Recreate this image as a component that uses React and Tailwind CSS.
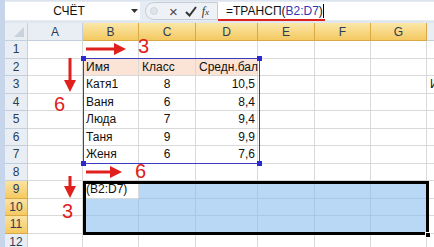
import React from "react";

const cols = [
  { key: "A", w: "w-[55px]", sel: false },
  { key: "B", w: "w-[56px]", sel: true },
  { key: "C", w: "w-[57px]", sel: true },
  { key: "D", w: "w-[62px]", sel: true },
  { key: "E", w: "w-[57px]", sel: true },
  { key: "F", w: "w-[56px]", sel: true },
  { key: "G", w: "w-[56px]", sel: true },
  { key: "H", w: "flex-1", sel: false, label: "" },
];

const data = {
  2: { B: "Имя", C: "Класс", D: "Средн.бал" },
  3: { B: "Катя1", C: "8", D: "10,5", H: "И" },
  4: { B: "Ваня", C: "6", D: "8,4" },
  5: { B: "Люда", C: "7", D: "9,4" },
  6: { B: "Таня", C: "9", D: "9,9" },
  7: { B: "Женя", C: "6", D: "7,6" },
  9: { B: "(B2:D7)" },
};

const rows = [1, 2, 3, 4, 5, 6, 7, 8, 9, 10, 11, 12];

const inSel = (r, c) => r >= 9 && r <= 11 && c !== "A" && c !== "H";

const Cell = ({ r, c }) => {
  const txt = data[r]?.[c];
  let bg = "bg-white";
  let border = "border-[#d9d9d9]";
  if (r === 2 && ["B", "C", "D"].includes(c)) bg = "bg-[#fbe4d5]";
  if (inSel(r, c) && !(r === 9 && c === "B")) {
    bg = "bg-[#b9d8f6]";
    border = "border-[#a9c7e8]";
  }
  let align = "justify-start pl-[3px]";
  if (c === "C" && r > 2) align = "justify-center";
  if (c === "D" && r > 2) align = "justify-end pr-[2px]";
  if (c === "H") align = "justify-start pl-[3px]";
  return (
    <div
      className={`${cols.find((x) => x.key === c).w} h-full shrink-0 border-r border-b ${border} ${bg} flex items-center ${align} overflow-visible whitespace-nowrap`}
    >
      {txt}
    </div>
  );
};

const Arrow = ({ dir, len, className }) =>
  dir === "right" ? (
    <svg className={className} width={len} height="12" viewBox={`0 0 ${len} 12`}>
      <rect x="0" y="4.5" width={len - 10} height="3" fill="#e0201c" />
      <polygon points={`${len - 12},0 ${len},6 ${len - 12},12`} fill="#e0201c" />
    </svg>
  ) : (
    <svg className={className} width="12" height={len} viewBox={`0 0 12 ${len}`}>
      <rect x="4.5" y="0" width="3" height={len - 10} fill="#e0201c" />
      <polygon points={`0,${len - 12} 12,${len - 12} 6,${len}`} fill="#e0201c" />
    </svg>
  );

export default function App() {
  return (
    <div
      className="relative w-[434px] h-[247px] overflow-hidden bg-white flex text-[12px] text-[#111]"
      style={{ fontFamily: '"Liberation Sans", Arial, sans-serif' }}
    >
      <div className="w-[5px] shrink-0 bg-[#c6d5e9]" />
      <div className="flex-1 flex flex-col">
        {/* formula bar */}
        <div className="h-[21px] shrink-0 flex items-stretch bg-[#e6ecf4] border-t border-[#dce3ec]">
          <div className="w-[135px] my-[1px] bg-white flex items-center relative">
            <span className="flex-1 text-center text-[12px] pl-[2px]">СЧЁТ</span>
            <svg width="7" height="4" viewBox="0 0 7 4" className="mr-[2px]">
              <polygon points="0,0 7,0 3.5,4" fill="#333" />
            </svg>
          </div>
          <div className="ml-[5px] w-[73px] my-[1px] rounded-l-[10px] bg-[#eef2f7] border border-[#c4ccd6] flex items-center">
            <div className="w-[8px] h-[8px] rounded-full bg-[#dfe4ea] border border-[#cfd6de] ml-[4px]" />
            <span className="ml-[11px] text-[15px] leading-none text-[#444]">×</span>
            <svg className="ml-[7px]" width="12" height="11" viewBox="0 0 12 11">
              <path d="M1 6 L4.5 9.5 L11 1" stroke="#333" strokeWidth="2" fill="none" />
            </svg>
            <span className="ml-[5px] text-[12px] italic text-[#333]" style={{ fontFamily: '"Liberation Serif", serif' }}>
              f<span className="text-[9px]">x</span>
            </span>
          </div>
          <div className="flex-1 my-[1px] bg-white flex items-center pl-[8px] relative">
            <span className="text-[12px]">=ТРАНСП(</span>
            <span className="text-[12px] text-[#3535b5]">B2:D7</span>
            <span className="text-[12px]">)</span>
            <div className="w-[1px] h-[14px] bg-black" />
            <div className="absolute left-0 top-[17px] w-[107px] h-[2px] bg-[#e0201c]" />
          </div>
        </div>
        <div className="h-[2px] shrink-0 bg-[#dfe6ee]" />
        {/* column headers */}
        <div className="h-[18px] flex shrink-0">
          <div className="w-[23px] shrink-0 bg-[#e9eef4] border-r border-b border-[#c3cfdc] relative">
            <svg className="absolute right-[3px] bottom-[3px]" width="10" height="10" viewBox="0 0 10 10">
              <polygon points="10,0 10,10 0,10" fill="#c9d2dc" />
            </svg>
          </div>
          {cols.map((c) => (
            <div
              key={c.key}
              className={`${c.w} shrink-0 border-r border-b flex items-center justify-center text-[12px] ${
                c.sel
                  ? "bg-gradient-to-b from-[#fbe7a8] to-[#f4c95f] border-[#d9a948] text-[#2a3d55]"
                  : "bg-[#e9eef4] border-[#c3cfdc] text-[#2a3d55]"
              }`}
            >
              {c.label ?? c.key}
            </div>
          ))}
        </div>
        {rows.map((r) => (
          <div key={r} className="h-[17.5px] flex shrink-0">
            <div
              className={`w-[23px] shrink-0 border-r border-b flex items-center justify-center text-[12px] text-[#2a3d55] ${
                r >= 9 && r <= 11
                  ? "bg-gradient-to-b from-[#fbe3a0] to-[#f4c95f] border-[#d9a948]"
                  : "bg-[#e9eef4] border-[#c3cfdc]"
              }`}
            >
              {r}
            </div>
            {cols.map((c) => (
              <Cell key={c.key} r={r} c={c.key} />
            ))}
          </div>
        ))}
      </div>

      {/* blue reference range B2:D7 */}
      <div className="absolute left-[83px] top-[58px] w-[177px] h-[106px] border-[1.5px] border-[#3b3bc2] pointer-events-none" />
      <div className="absolute left-[81px] top-[56px] w-[5px] h-[5px] bg-[#2a2ad0]" />
      <div className="absolute left-[257px] top-[56px] w-[5px] h-[5px] bg-[#2a2ad0]" />
      <div className="absolute left-[81px] top-[161px] w-[5px] h-[5px] bg-[#2a2ad0]" />
      <div className="absolute left-[257px] top-[161px] w-[5px] h-[5px] bg-[#2a2ad0]" />

      {/* selection B9:G11 */}
      <div className="absolute left-[83px] top-[181px] w-[346px] h-[54px] border-[3px] border-black pointer-events-none" />
      <div className="absolute left-[425px] top-[232px] w-[6px] h-[6px] bg-black border border-white" />

      {/* annotations */}
      <Arrow dir="right" len={40} className="absolute left-[86px] top-[43px]" />
      <span className="absolute left-[138px] top-[36px] text-[20px] leading-none text-[#e0201c]">3</span>
      <Arrow dir="down" len={34} className="absolute left-[64px] top-[58px]" />
      <span className="absolute left-[54px] top-[94px] text-[20px] leading-none text-[#e0201c]">6</span>
      <Arrow dir="right" len={36} className="absolute left-[86px] top-[166px]" />
      <span className="absolute left-[135px] top-[161px] text-[20px] leading-none text-[#e0201c]">6</span>
      <Arrow dir="down" len={22} className="absolute left-[64px] top-[176px]" />
      <span className="absolute left-[62px] top-[201px] text-[20px] leading-none text-[#e0201c]">3</span>
    </div>
  );
}
